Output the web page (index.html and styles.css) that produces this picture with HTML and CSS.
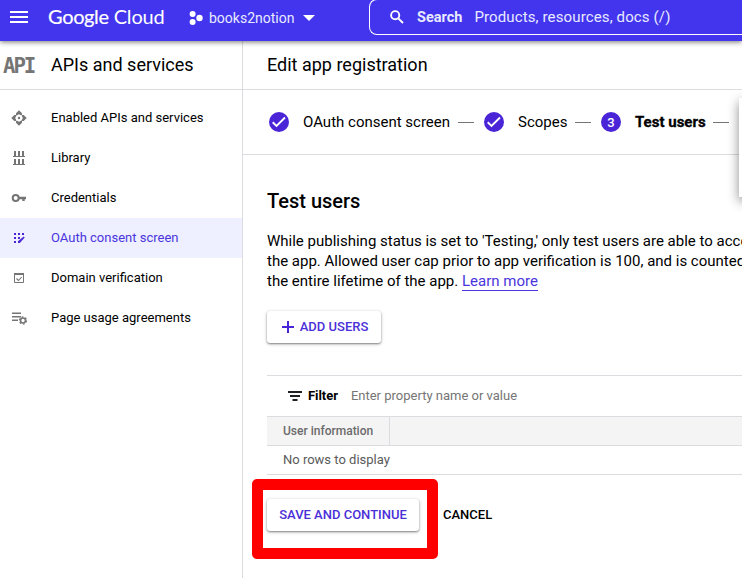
FILE: index.html
```html
<!DOCTYPE html>
<html lang="en">
<head>
<meta charset="utf-8">
<title>Edit app registration</title>
<link rel="stylesheet" href="styles.css">
</head>
<body>
<header class="topbar">
  <svg class="menu-icon" width="18" height="12" viewBox="0 0 18 12" fill="#fff"><path d="M0 0h18v2H0zM0 5h18v2H0zM0 10h18v2H0z"/></svg>
  <div class="logo"><span class="logo-google">Google</span><span class="logo-cloud">Cloud</span></div>
  <div class="project">
    <svg width="14" height="14" viewBox="0 0 14 14" fill="#fff"><circle cx="3.6" cy="3" r="3"/><circle cx="10.500" cy="7" r="3.200"/><circle cx="3.600" cy="11" r="3"/></svg>
    <span class="project-name">books2notion</span>
    <svg width="12" height="6" viewBox="0 0 12 6" fill="#fff"><path d="M0 0h12L6 6z"/></svg>
  </div>
  <div class="search">
    <svg width="14" height="14" viewBox="0 0 14 14" fill="none" stroke="#fff" stroke-width="1.9"><circle cx="5.2" cy="5.2" r="4.1"/><path d="M8.3 8.3l4.700 4.700"/></svg>
    <b class="search-label">Search</b>
    <span class="search-hint">Products, resources, docs (/)</span>
  </div>
</header>
<div class="shell">
  <aside class="sidebar">
    <div class="product"><span class="api-mark">API</span><h2 class="product-title">APIs and services</h2></div>
    <nav class="nav">
      <a class="nav-item"><svg width="16" height="16" viewBox="0 0 16 16" fill="#757575"><path d="M8 .3l3 3v2.400L8 4.200 5 5.700V3.300zM8 15.700l3-3v-2.400L8 11.800l-3-1.500v2.400zM.3 8l3-3h2.400L4.200 8l1.500 3H3.300zM15.700 8l-3-3h-2.400L11.800 8l-1.500 3h2.400z"/><circle cx="8" cy="8" r="1.200"/></svg><span class="nav-text">Enabled APIs and services</span></a>
      <a class="nav-item"><svg width="16" height="16" viewBox="0 0 16 16" fill="#757575"><path d="M3 1h2v5h2V1h2v5h2V1h2v5h1v1H2V6h1zM3 9h2v5h2V9h2v5h2V9h2v5h1v1H2v-1h1z"/></svg><span class="nav-text">Library</span></a>
      <a class="nav-item"><svg width="16" height="16" viewBox="0 0 16 16" fill="none" stroke="#757575" stroke-width="2"><circle cx="4.700" cy="8" r="3"/><path d="M7.500 8H15M12.500 8v3" stroke-width="2.400"/></svg><span class="nav-text">Credentials</span></a>
      <a class="nav-item active"><svg width="16" height="16" viewBox="0 0 16 16" fill="#4a25d8"><path d="M3 3h2v2H3zM7 3h2v2H7zM11 3h2v2h-2zM3 7h2v2H3zM7 7h2v2H7zM3 11h2v2H3z"/><path d="M7 11.300l5.700-4.900 1 1.200L8.800 13H7z"/></svg><span class="nav-text">OAuth consent screen</span></a>
      <a class="nav-item"><svg width="16" height="16" viewBox="0 0 16 16" fill="none" stroke="#757575"><path d="M3.500 4v8.500h9V4"/><path d="M3 4h10" stroke-width="2"/><path d="M5.500 8.500l2 2 3.200-3.500" stroke-width="1.100"/></svg><span class="nav-text">Domain verification</span></a>
      <a class="nav-item"><svg width="16" height="16" viewBox="0 0 16 16" fill="#757575"><path d="M1 2.500h9V4H1zM1 6h9v1.500H1zM1 9.500h6V11H1z"/><circle cx="12" cy="10.500" r="2.500" fill="none" stroke="#757575" stroke-width="1.600"/><circle cx="12" cy="10.500" r="3.600" fill="none" stroke="#757575" stroke-width="1.200" stroke-dasharray="1.800 1.970"/></svg><span class="nav-text">Page usage agreements</span></a>
    </nav>
  </aside>
  <main class="main">
    <div class="titlebar"><h1 class="page-title">Edit app registration</h1></div>
    <div class="steps">
      <svg width="20" height="20" viewBox="0 0 20 20"><circle cx="10" cy="10" r="10" fill="#4a25d8"/><path d="M3.700 10.300l3.800 3.700 8.500-8.500" fill="none" stroke="#fff" stroke-width="1.900"/></svg>
      <span class="step-text step-one">OAuth consent screen</span><i class="dash"></i>
      <svg class="step-dot" width="20" height="20" viewBox="0 0 20 20"><circle cx="10" cy="10" r="10" fill="#4a25d8"/><path d="M3.700 10.300l3.800 3.700 8.500-8.500" fill="none" stroke="#fff" stroke-width="1.900"/></svg>
      <span class="step-text step-two">Scopes</span><i class="dash"></i>
      <span class="step-dot step-number">3</span>
      <span class="step-text step-three">Test users</span><i class="dash dash-last"></i>
    </div>
    <section class="content">
      <h2 class="heading">Test users</h2>
      <p class="copy">While publishing status is set to 'Testing,' only test users are able to access<br>the app. Allowed user cap prior to app verification is 100, and is counted over<br>the entire lifetime of the app. <a class="link">Learn more</a></p>
      <button class="button add"><svg width="12" height="12" viewBox="0 0 12 12" fill="#4a25d8"><path d="M5 0h2v5h5v2H7v5H5V7H0V5h5z"/></svg><span class="add-text">ADD USERS</span></button>
      <div class="table">
        <div class="filter">
          <svg width="14" height="10" viewBox="0 0 14 10" fill="#202124"><path d="M0 0h14v2H0zM2 4h10v2H2zM4.500 8h5v2h-5z"/></svg>
          <b class="filter-label">Filter</b><span class="filter-hint">Enter property name or value</span>
        </div>
        <div class="thead"><span class="th">User information</span></div>
        <div class="empty">No rows to display</div>
      </div>
      <div class="actions">
        <div class="highlight"><button class="button save">SAVE AND CONTINUE</button></div>
        <button class="cancel">CANCEL</button>
      </div>
    </section>
  </main>
</div>
<div class="side-card"></div>
</body>
</html>
```

FILE: styles.css
```css
* { box-sizing: border-box; }
body { margin: 0; width: 742px; height: 578px; overflow: hidden; background: #fff; color: #000; font-family: Roboto, "Liberation Sans", sans-serif; }
h1, h2, p { margin: 0; font-weight: 400; }
svg { display: block; flex: none; }
span, b { white-space: nowrap; }
button { border: 0; background: #fff; font: inherit; padding: 0; white-space: nowrap; }

.topbar { position: relative; z-index: 2; display: flex; height: 41px; background: #4335ed; color: #e8eaff; box-shadow: 0 1px 5px rgba(0,0,0,.55); }
.menu-icon { margin: 11px 0 0 10px; }
.logo { width: 117px; margin: 3px 0 0 20px; display: flex; gap: 5px; font-family: Lato, sans-serif; font-size: 20px; line-height: 26px; color: #fff; white-space: nowrap; }
.logo-google { letter-spacing: -.35px; -webkit-text-stroke: .2px #fff; }
.logo-cloud { letter-spacing: -.2px; }
.project { display: flex; align-items: center; height: 36px; margin-left: 24px; width: 180px; font-size: 14px; }
.project-name { margin: 0 9px 0 6px; letter-spacing: 0; }
.search { flex: 1; display: flex; align-items: center; height: 36px; margin-top: -1px; padding-left: 20px; border: 1px solid #fff; border-right: 0; border-radius: 8px 0 0 8px; font-size: 15px; }
.search-label { margin: 0 12px 0 13px; font-weight: 700; font-size: 14.500px; }
.search-hint { letter-spacing: .13px; }

.shell { display: flex; height: 537px; }
.sidebar { width: 243px; flex: none; border-right: 1px solid #dadce0; }
.product, .titlebar { display: flex; align-items: center; height: 49px; border-bottom: 1px solid #dadce0; }
.api-mark { width: 47px; padding: 2px 0 0 3px; font: 700 22px/24px "DejaVu Sans Mono", monospace; letter-spacing: -2.200px; color: #757575; transform: scaleX(.94); transform-origin: 3px 50%; }
.product-title, .page-title { font-size: 18px; line-height: 24px; }
.product-title { margin-left: 4px; }
.nav { padding-top: 8px; }
.nav-item { display: flex; align-items: center; gap: 24px; height: 40px; padding-left: 11px; font-size: 13px; }
.nav-text, .add-text, .filter-label, .filter-hint { padding-bottom: 2px; }
.active { background: #eef0ff; color: #4a35dc; }

.main { flex: 1; min-width: 0; overflow: hidden; }
.titlebar { padding-left: 24px; }
.steps { display: flex; align-items: center; height: 65px; padding-left: 26px; border-bottom: 1px solid #dadce0; font-size: 15px; }
.step-one { width: 147px; margin-left: 14px; }
.step-two { width: 49px; margin-left: 14px; }
.step-three { width: 70px; margin-left: 14px; font-weight: 700; -webkit-text-stroke: .3px #000; }
.dash { width: 16px; height: 1px; margin-left: 8px; background: #757575; flex: none; }
.step-dot { margin-left: 10px; }
.step-number { display: flex; align-items: center; justify-content: center; flex: none; width: 20px; height: 20px; border-radius: 50%; background: #4a25d8; color: #fff; font-size: 13px; font-weight: 500; }
.content { padding: 34px 0 0 24px; }
.heading { font-size: 20px; line-height: 24px; font-weight: 500; }
.copy { width: 540px; margin-top: 18px; font-size: 15px; line-height: 20px; white-space: nowrap; }
.link { color: #4a35dc; border-bottom: 1px solid #4a35dc; }
.button { display: flex; align-items: center; justify-content: center; height: 32px; border-radius: 3px; color: #4a2fd8; font-size: 13px; font-weight: 500; box-shadow: 0 1px 2px rgba(0,0,0,.42), 0 1px 4px rgba(0,0,0,.16); }
.add { width: 114px; margin-top: 20px; padding-left: 2px; gap: 6px; }
.table { margin-top: 32px; border-top: 1px solid #dadce0; font-size: 13px; }
.filter { display: flex; align-items: center; height: 40px; padding-left: 21px; }
.filter-label { margin: 0 13px 0 6px; letter-spacing: -.05px; }
.filter-hint { color: #757575; }
.thead { height: 30px; display: flex; background: #f4f4f4; border: solid #dadce0; border-width: 1px 0; color: #6b6b6b; font-size: 12px; font-weight: 500; }
.th { width: 123px; padding-left: 16px; line-height: 28px; border-right: 1px solid #dadce0; }
.empty { height: 29px; padding-left: 16px; line-height: 28px; border-bottom: 1px solid #dadce0; color: #5a5a5a; }
.actions { display: flex; gap: 5.500px; margin: 3.500px 0 0 -15.500px; }
.highlight { width: 186px; height: 80px; padding: 9.500px 0 0 4.500px; border: 11px solid #f00; border-radius: 5px; }
.save { width: 152px; padding-bottom: 2px; }
.cancel { height: 71px; color: #000; font-size: 13px; font-weight: 500; }

/* Edge of the floating card that continues past the viewport. */
.side-card { position: absolute; left: 739px; top: 98px; width: 20px; height: 99px; background: #fff; box-shadow: 0 4px 12px rgba(0,0,0,.45); }
```
